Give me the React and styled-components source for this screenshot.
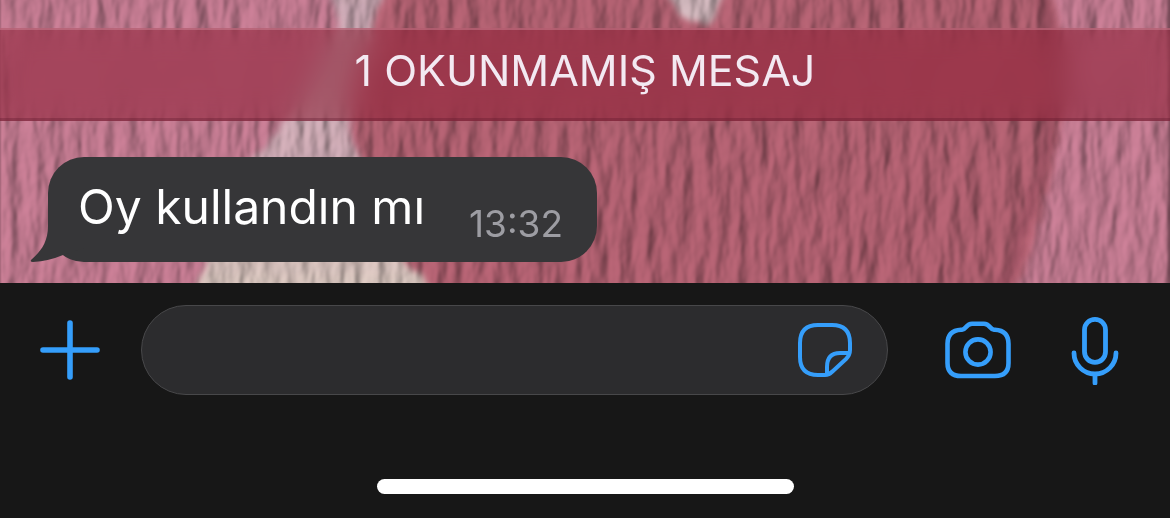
import React from "react";
import styled, { createGlobalStyle } from "styled-components";

const GlobalStyle = createGlobalStyle`
  *, *::before, *::after { box-sizing: border-box; }
  body {
    margin: 0;
    background: #171717;
    font-family: Inter, "Liberation Sans", sans-serif;
  }
`;

const Screen = styled.div`
  display: flex;
  flex-direction: column;
  min-height: 100vh;
`;

const Chat = styled.main`
  position: relative;
  overflow: hidden;
  padding: 28px 0 21px;
  background: #b9657a;
`;

const WallpaperArt = styled.svg`
  position: absolute;
  inset: 0;
  width: 100%;
  height: 100%;
`;

const UnreadBanner = styled.div`
  position: relative;
  padding: 14px 0 21px;
  border-top: 2px solid rgba(215, 150, 165, 0.4);
  border-bottom: 3px solid rgba(90, 20, 40, 0.3);
  background: rgba(136, 24, 46, 0.5);
  backdrop-filter: blur(14px) saturate(1.15);
  color: #f3e9f2;
  font-size: 43px;
  line-height: 53px;
  text-align: center;
`;

const Messages = styled.div`
  position: relative;
  display: flex;
  flex-direction: column;
  align-items: flex-start;
  padding: 36px 48px 0;
`;

const Bubble = styled.article`
  position: relative;
  display: flex;
  align-items: flex-end;
  gap: 44px;
  padding: 20px 34px 16px 30px;
  border-radius: 36px;
  background: #363638;
`;

const Tail = styled.svg`
  position: absolute;
  left: -18px;
  bottom: 0;
  width: 54px;
  height: 54px;
`;

const MessageText = styled.p`
  position: relative;
  margin: 0;
  padding-bottom: 9px;
  color: #fff;
  font-size: 48px;
  line-height: 60px;
`;

const Time = styled.time`
  color: #9d9da3;
  font-size: 37px;
  line-height: 44px;
`;

const Footer = styled.footer`
  display: flex;
  flex: 1;
  flex-direction: column;
  justify-content: space-between;
  align-items: center;
  gap: 84px;
  padding: 22px 0 24px;
  background: #171717;
`;

const Composer = styled.form`
  display: flex;
  align-items: center;
  width: 100%;
  padding: 0 51px 0 40px;
`;

const IconButton = styled.button`
  flex: none;
  display: flex;
  width: ${(p) => p.$width}px;
  margin: 0 0 0 ${(p) => p.$gap || 0}px;
  padding: 0;
  border: 0;
  background: none;
  color: #359efb;
  cursor: pointer;

  svg {
    display: block;
    width: 100%;
    fill: none;
    stroke: currentColor;
    stroke-linecap: round;
    stroke-linejoin: round;
  }
`;

const Field = styled.div`
  flex: 1;
  min-width: 0;
  display: flex;
  align-items: center;
  height: 90px;
  margin-left: 41px;
  padding: 0 34px 0 40px;
  border: 1px solid #48484a;
  border-radius: 45px;
  background: #2c2c2e;
`;

const TextInput = styled.input`
  flex: 1;
  min-width: 0;
  padding: 0;
  border: 0;
  outline: 0;
  background: none;
  color: #fff;
  font: inherit;
  font-size: 43px;
`;

const HomeIndicator = styled.div`
  width: 417px;
  max-width: 60%;
  height: 15px;
  border-radius: 8px;
  background: #fff;
`;

function Wallpaper() {
  return (
    <WallpaperArt viewBox="0 0 1170 283" preserveAspectRatio="xMidYMid slice" aria-hidden="true">
      <defs>
        <filter id="fibres" x="0" y="0" width="100%" height="100%" colorInterpolationFilters="sRGB">
          <feTurbulence type="fractalNoise" baseFrequency="0.07 0.018" numOctaves="4" seed="7" result="noise" />
          <feGaussianBlur in="noise" stdDeviation="0.9" result="smooth" />
          <feDiffuseLighting in="smooth" surfaceScale="5" diffuseConstant="0.8" lightingColor="#fff" result="light">
            <feDistantLight azimuth="205" elevation="56" />
          </feDiffuseLighting>
          <feGaussianBlur in="light" stdDeviation="1" result="soft" />
          <feComposite in="SourceGraphic" in2="soft" operator="arithmetic" k1="0.76" k2="0.46" k3="0" k4="0" />
        </filter>
        <filter id="frayed" x="-10%" y="-10%" width="120%" height="120%" colorInterpolationFilters="sRGB">
          <feTurbulence type="fractalNoise" baseFrequency="0.06 0.03" numOctaves="2" seed="3" />
          <feDisplacementMap in="SourceGraphic" scale="16" xChannelSelector="R" yChannelSelector="G" />
          <feGaussianBlur stdDeviation="3" />
        </filter>
        <linearGradient id="pale" x1="0" y1="0" x2="0" y2="1">
          <stop offset="0" stopColor="#c4a3ae" />
          <stop offset="0.6" stopColor="#cba9b2" />
          <stop offset="1" stopColor="#d6c6bc" />
        </linearGradient>
      </defs>
      <g filter="url(#fibres)">
        <rect width="1170" height="283" fill="#c27a90" />
        <g filter="url(#frayed)">
          <path d="M326-20 340 28 300 100 252 160 230 215 192 300H470L400 255 352 145 350 95 392-20Z" fill="url(#pale)" />
          <path d="M388-20H1046Q1068 50 1062 112Q1056 200 1010 300H448L404 262Q352 170 354 100Z" fill="#b06070" />
          <path d="M654-20 690 22Q700 29 710 22L732-20Z" fill="#cbb2b7" />
          <path d="M1040-10Q1060 70 1050 125Q1036 205 1000 295" fill="none" stroke="#7b3b4a" strokeWidth="12" strokeOpacity="0.4" />
          <path d="M344 95Q350 145 380 200" fill="none" stroke="#7b3b4a" strokeWidth="5" strokeOpacity="0.3" />
        </g>
      </g>
    </WallpaperArt>
  );
}

const PlusIcon = () => (
  <svg viewBox="0 0 60 60" strokeWidth="5.6">
    <path d="M30 3v54M3 30h54" />
  </svg>
);

const StickerIcon = () => (
  <svg viewBox="0 0 56 56" strokeWidth="4">
    <path d="M29 53H21Q3 53 3 35V21Q3 3 21 3H35Q53 3 53 21V28Q53 33 49 37L36 49Q32 53 28 53" />
    <path d="M30 52V45Q30 31 43 31H52" />
  </svg>
);

const CameraIcon = () => (
  <svg viewBox="0 0 66 58" strokeWidth="4.6">
    <path d="M17 8.8C21 8.5 21 2.8 27 2.8H39C45 2.8 45 8.5 49 8.8H50Q63.5 9.5 63.5 23V42Q63.5 55 50 55H16Q2.5 55 2.5 42V23Q2.5 9.5 16 8.8Z" />
    <circle cx="33" cy="31" r="12.6" />
  </svg>
);

const MicIcon = () => (
  <svg viewBox="0 0 48 70" strokeWidth="4.8">
    <rect x="13.5" y="4.3" width="21" height="43" rx="10.5" />
    <path d="M3 38A21 21 0 0 0 45 38M24 60V68" />
  </svg>
);

export default function App() {
  return (
    <Screen>
      <GlobalStyle />
      <Chat>
        <Wallpaper />
        <UnreadBanner>1 OKUNMAMIŞ MESAJ</UnreadBanner>
        <Messages>
          <Bubble>
            <Tail viewBox="0 0 54 54" aria-hidden="true">
              <path d="M18 0V18C18 35 10 44 1 52Q0 54 3 54Q19 53 33 47L54 40V0Z" fill="#363638" />
            </Tail>
            <MessageText>Oy kullandın mı</MessageText>
            <Time dateTime="13:32">13:32</Time>
          </Bubble>
        </Messages>
      </Chat>
      <Footer>
        <Composer onSubmit={(e) => e.preventDefault()}>
          <IconButton type="button" aria-label="Ekle" $width={60}>
            <PlusIcon />
          </IconButton>
          <Field>
            <TextInput type="text" aria-label="Mesaj" />
            <IconButton type="button" aria-label="Çıkartma" $width={56}>
              <StickerIcon />
            </IconButton>
          </Field>
          <IconButton type="button" aria-label="Kamera" $width={66} $gap={57}>
            <CameraIcon />
          </IconButton>
          <IconButton type="button" aria-label="Sesli mesaj" $width={48} $gap={60}>
            <MicIcon />
          </IconButton>
        </Composer>
        <HomeIndicator />
      </Footer>
    </Screen>
  );
}
